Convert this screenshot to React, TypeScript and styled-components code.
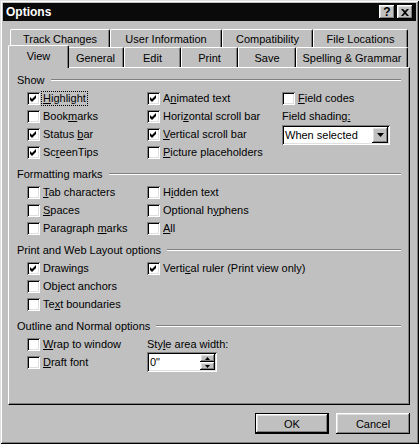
import React from "react";
import styled, { createGlobalStyle, css } from "styled-components";

const GlobalStyle = createGlobalStyle`
  html, body { margin: 0; padding: 0; background: #c0c0c0; }
  body {
    font-family: "Liberation Sans", Arial, sans-serif;
    font-size: 11px;
    color: #000;
  }
`;

// classic 3d edges
const raised = css`
  box-shadow: inset -1px -1px #000, inset 1px 1px #fff, inset -2px -2px #808080, inset 2px 2px #dfdfdf;
`;
const sunken = css`
  box-shadow: inset 1px 1px #808080, inset -1px -1px #fff, inset 2px 2px #000, inset -2px -2px #dfdfdf;
`;

const Window = styled.div`
  width: 419px;
  height: 444px;
  box-sizing: border-box;
  padding: 3px;
  background: #c0c0c0;
  box-shadow: inset 1px 1px #dfdfdf, inset -1px -1px #000, inset 2px 2px #fff, inset -2px -2px #808080;
  display: flex;
  flex-direction: column;
`;

const TitleBar = styled.div`
  height: 18px;
  flex: none;
  background: #0a0a0a;
  display: flex;
  align-items: center;
  gap: 2px;
  padding: 0 3px 0 3px;
`;

const Title = styled.div`
  flex: 1;
  color: #fff;
  font-weight: bold;
  font-size: 12px;
`;

const TitleButton = styled.span`
  width: 16px;
  height: 14px;
  background: #c0c0c0;
  ${raised};
  display: flex;
  align-items: center;
  justify-content: center;
  font-weight: bold;
  font-size: 12px;
`;

const Body = styled.div`
  flex: 1;
  display: flex;
  flex-direction: column;
  padding: 8px 6px 7px 5px;
`;

const TabRow = styled.div<{ $h: number }>`
  display: flex;
  align-items: flex-end;
  height: ${(p) => p.$h}px;
  margin: 0 2px;
`;

const Tab = styled.div<{ $w: number; $active?: boolean }>`
  width: ${(p) => p.$w}px;
  flex: none;
  box-sizing: border-box;
  height: 100%;
  display: flex;
  align-items: center;
  justify-content: center;
  white-space: nowrap;
  background: #c0c0c0;
  border-top: 1px solid #fff;
  border-left: 1px solid #fff;
  border-right: 1px solid #000;
  border-radius: 2px 2px 0 0;
  box-shadow: inset -1px 0 #808080;
  ${(p) =>
    p.$active &&
    css`
      position: relative;
      z-index: 1;
      width: ${p.$w + 4}px;
      height: calc(100% + 3px);
      margin: 0 -2px -1px;
      padding-bottom: 2px;
    `}
`;

const Panel = styled.div`
  flex: 1;
  box-sizing: border-box;
  border-top: 1px solid #fff;
  border-left: 1px solid #fff;
  border-right: 1px solid #000;
  border-bottom: 1px solid #000;
  box-shadow: inset -1px -1px #808080;
  padding: 3px 8px 0 8px;
  display: flex;
  flex-direction: column;
  gap: 4px;
`;

const Section = styled.div`
  display: flex;
  flex-direction: column;
`;

const SectionHead = styled.div`
  height: 18px;
  display: flex;
  align-items: center;
  gap: 6px;
  white-space: nowrap;
  &::after {
    content: "";
    flex: 1;
    border-top: 1px solid #808080;
    border-bottom: 1px solid #fff;
  }
`;

const Columns = styled.div`
  display: grid;
  grid-template-columns: 120px 135px 1fr;
  padding-left: 10px;
`;

const Column = styled.div`
  display: flex;
  flex-direction: column;
`;

const CheckRow = styled.div`
  height: 18px;
  display: flex;
  align-items: center;
  gap: 2px;
  white-space: nowrap;
`;

const Box = styled.span`
  width: 13px;
  height: 13px;
  flex: none;
  box-sizing: border-box;
  background: #fff;
  ${sunken};
  display: flex;
  align-items: center;
  justify-content: center;
`;

const CheckText = styled.span<{ $focus?: boolean }>`
  padding: 0 1px;
  line-height: 13px;
  ${(p) =>
    p.$focus &&
    css`
      outline: 1px dotted #000;
    `}
`;

const FieldLabel = styled.div<{ $h: number }>`
  height: ${(p) => p.$h}px;
  display: flex;
  align-items: center;
  white-space: nowrap;
`;

const Field = styled.div<{ $w: number }>`
  width: ${(p) => p.$w}px;
  height: 20px;
  box-sizing: border-box;
  padding: 2px;
  background: #fff;
  ${sunken};
  display: flex;
  align-items: stretch;
`;

const FieldText = styled.span`
  flex: 1;
  display: flex;
  align-items: center;
  padding-left: 1px;
`;

const DropButton = styled.span`
  width: 16px;
  background: #c0c0c0;
  ${raised};
  display: flex;
  align-items: center;
  justify-content: center;
`;

const SpinColumn = styled.span`
  width: 15px;
  display: flex;
  flex-direction: column;
`;

const SpinButton = styled.span`
  flex: 1;
  background: #c0c0c0;
  ${raised};
  display: flex;
  align-items: center;
  justify-content: center;
`;

const Footer = styled.div`
  display: flex;
  justify-content: flex-end;
  gap: 7px;
  margin-top: 8px;
`;

const Button = styled.button<{ $default?: boolean }>`
  width: 74px;
  height: 21px;
  box-sizing: border-box;
  padding: 0;
  font: inherit;
  color: #000;
  background: #c0c0c0;
  border: none;
  ${raised};
  ${(p) =>
    p.$default &&
    css`
      border: 1px solid #000;
    `}
`;

const U = styled.span`
  text-decoration: underline;
`;

const mn = (text: string, i: number) =>
  i < 0 ? (
    text
  ) : (
    <>
      {text.slice(0, i)}
      <U>{text[i]}</U>
      {text.slice(i + 1)}
    </>
  );

type Opt = [string, number, boolean, boolean?];

const Check = ({ opt }: { opt: Opt }) => (
  <CheckRow>
    <Box>
      {opt[2] && (
        <svg width="7" height="7" viewBox="0 0 7 7">
          <path d="M0 2 L2 4 L6 0 L6 3 L2 7 L0 5 Z" fill="#000" />
        </svg>
      )}
    </Box>
    <CheckText $focus={opt[3]}>{mn(opt[0], opt[1])}</CheckText>
  </CheckRow>
);

const Arrow = ({ up, w = 7 }: { up?: boolean; w?: number }) => {
  const h = Math.ceil(w / 2);
  return (
    <svg width={w} height={h} viewBox={`0 0 ${w} ${h}`}>
      <path d={up ? `M0 ${h} L${w / 2} 0 L${w} ${h} Z` : `M0 0 L${w} 0 L${w / 2} ${h} Z`} fill="#000" />
    </svg>
  );
};

const backTabs: [string, number][] = [
  ["Track Changes", 100],
  ["User Information", 112],
  ["Compatibility", 91],
  ["File Locations", 95],
];
const frontTabs: [string, number][] = [
  ["View", 57],
  ["General", 57],
  ["Edit", 57],
  ["Print", 57],
  ["Save", 58],
  ["Spelling & Grammar", 112],
];

const show1: Opt[] = [
  ["Highlight", 0, true, true],
  ["Bookmarks", 4, false],
  ["Status bar", 7, true],
  ["ScreenTips", 2, true],
];
const show2: Opt[] = [
  ["Animated text", 1, true],
  ["Horizontal scroll bar", 4, true],
  ["Vertical scroll bar", 0, true],
  ["Picture placeholders", 0, false],
];
const marks1: Opt[] = [
  ["Tab characters", 0, false],
  ["Spaces", 0, false],
  ["Paragraph marks", 10, false],
];
const marks2: Opt[] = [
  ["Hidden text", 1, false],
  ["Optional hyphens", 10, false],
  ["All", 0, false],
];
const layout1: Opt[] = [
  ["Drawings", 6, true],
  ["Object anchors", 2, false],
  ["Text boundaries", 2, false],
];
const layout2: Opt[] = [["Vertical ruler (Print view only)", 5, true]];
const outline1: Opt[] = [
  ["Wrap to window", 0, false],
  ["Draft font", 0, false],
];

export default function App() {
  return (
    <>
      <GlobalStyle />
      <Window>
        <TitleBar>
          <Title>Options</Title>
          <TitleButton>?</TitleButton>
          <TitleButton>
            <svg width="8" height="7" viewBox="0 0 8 7">
              <path d="M0 0 L2 0 L4 2 L6 0 L8 0 L5 3.5 L8 7 L6 7 L4 5 L2 7 L0 7 L3 3.5 Z" fill="#000" />
            </svg>
          </TitleButton>
        </TitleBar>
        <Body>
          <TabRow $h={18}>
            {backTabs.map(([t, w]) => (
              <Tab key={t} $w={w}>
                {t}
              </Tab>
            ))}
          </TabRow>
          <TabRow $h={20}>
            {frontTabs.map(([t, w], i) => (
              <Tab key={t} $w={w} $active={i === 0}>
                {t}
              </Tab>
            ))}
          </TabRow>
          <Panel>
            <Section>
              <SectionHead>Show</SectionHead>
              <Columns>
                <Column>
                  {show1.map((o) => (
                    <Check key={o[0]} opt={o} />
                  ))}
                </Column>
                <Column>
                  {show2.map((o) => (
                    <Check key={o[0]} opt={o} />
                  ))}
                </Column>
                <Column>
                  <Check opt={["Field codes", 0, false]} />
                  <FieldLabel $h={18}>{mn("Field shading:", 13)}</FieldLabel>
                  <Field $w={108}>
                    <FieldText>When selected</FieldText>
                    <DropButton>
                      <Arrow />
                    </DropButton>
                  </Field>
                </Column>
              </Columns>
            </Section>
            <Section>
              <SectionHead>Formatting marks</SectionHead>
              <Columns>
                <Column>
                  {marks1.map((o) => (
                    <Check key={o[0]} opt={o} />
                  ))}
                </Column>
                <Column>
                  {marks2.map((o) => (
                    <Check key={o[0]} opt={o} />
                  ))}
                </Column>
              </Columns>
            </Section>
            <Section>
              <SectionHead>Print and Web Layout options</SectionHead>
              <Columns>
                <Column>
                  {layout1.map((o) => (
                    <Check key={o[0]} opt={o} />
                  ))}
                </Column>
                <Column>
                  {layout2.map((o) => (
                    <Check key={o[0]} opt={o} />
                  ))}
                </Column>
              </Columns>
            </Section>
            <Section>
              <SectionHead>Outline and Normal options</SectionHead>
              <Columns>
                <Column>
                  {outline1.map((o) => (
                    <Check key={o[0]} opt={o} />
                  ))}
                </Column>
                <Column>
                  <FieldLabel $h={17}>{mn("Style area width:", 3)}</FieldLabel>
                  <Field $w={70}>
                    <FieldText>0"</FieldText>
                    <SpinColumn>
                      <SpinButton>
                        <Arrow up w={5} />
                      </SpinButton>
                      <SpinButton>
                        <Arrow w={5} />
                      </SpinButton>
                    </SpinColumn>
                  </Field>
                </Column>
              </Columns>
            </Section>
          </Panel>
          <Footer>
            <Button $default>OK</Button>
            <Button>Cancel</Button>
          </Footer>
        </Body>
      </Window>
    </>
  );
}
